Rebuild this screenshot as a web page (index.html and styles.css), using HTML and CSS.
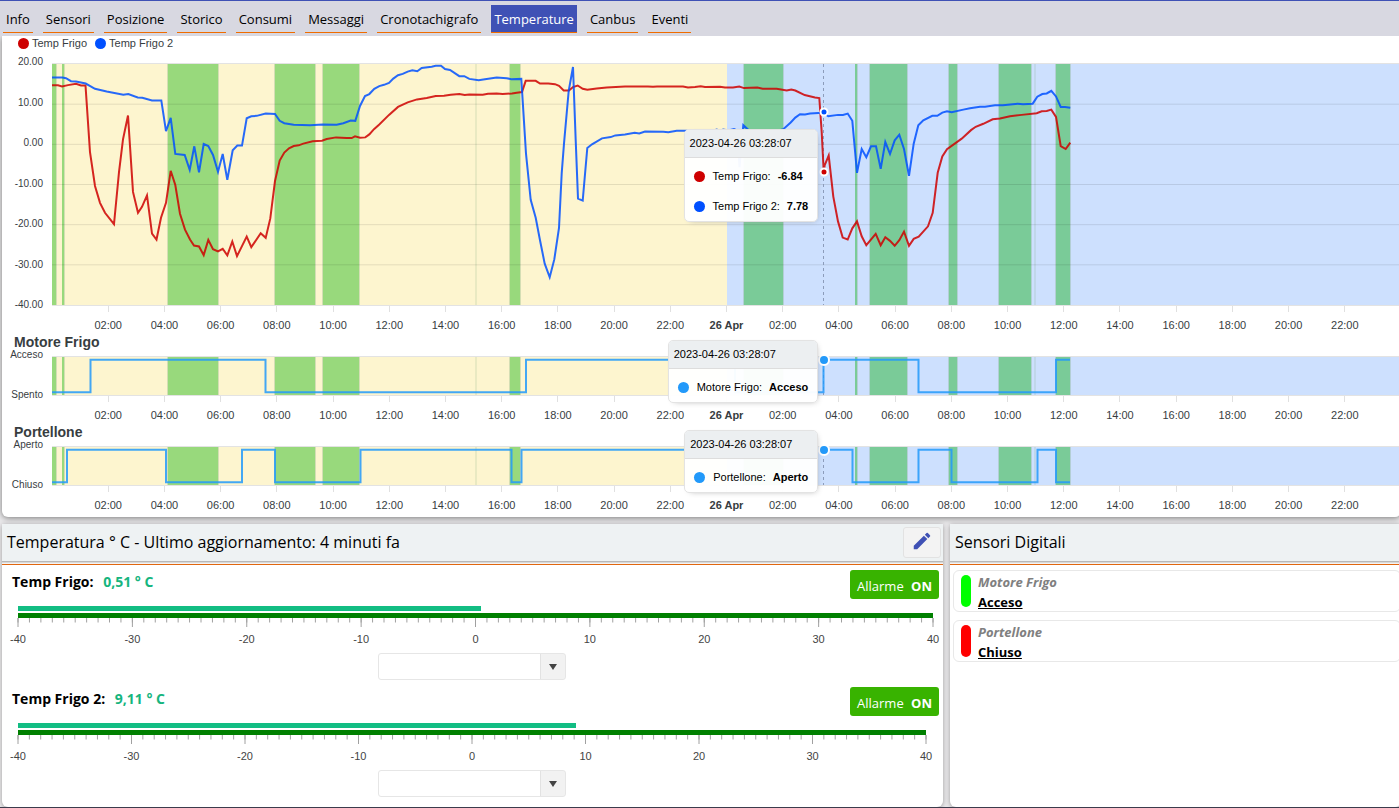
FILE: index.html
```html
<!DOCTYPE html>
<html lang="it">
<head>
<meta charset="utf-8">
<meta name="viewport" content="width=device-width, initial-scale=1">
<title>Temperature</title>
<link rel="stylesheet" href="styles.css">
</head>
<body>
<svg class="defs" aria-hidden="true">
  <defs>
    <g id="bands">
      <rect class="day-one" x="52" y="0" width="675" height="400"/>
      <rect class="day-two" x="727" y="0" width="674" height="400"/>
      <path class="stop-one" d="M52 0h4v400h-4zM62 0h2v400h-2zM168 0h50v400h-50zM275 0h40v400h-40zM323 0h36v400h-36zM510 0h10v400h-10z"/>
      <path class="stop-two" d="M744 0h39v400h-39zM855 0h2v400h-2zM870 0h37v400h-37zM949 0h8v400h-8zM999 0h32v400h-32zM1056 0h14v400h-14z"/>
      <path class="edge" d="M56.5 0V400M64.5 0V400M167.5 0V400M218.5 0V400M274.5 0V400M315.5 0V400M322.5 0V400M359.5 0V400M476 0V400M509.5 0V400M520.5 0V400M743.5 0V400M783.5 0V400M857.5 0V400M869.5 0V400M907.5 0V400M948.5 0V400M957.5 0V400M998.5 0V400M1031.5 0V400M1035 0V400M1055.5 0V400M1070.5 0V400"/>
    </g>
    <path id="minor-ticks" d="M0 0v5m1-5v5m1-5v5m1-5v5m1-5v5m1-5v5m1-5v5m1-5v5m1-5v5m1-5v5m1-5v5m1-5v5m1-5v5m1-5v5m1-5v5m1-5v5m1-5v5m1-5v5m1-5v5m1-5v5m1-5v5m1-5v5m1-5v5m1-5v5m1-5v5m1-5v5m1-5v5m1-5v5m1-5v5m1-5v5m1-5v5m1-5v5m1-5v5m1-5v5m1-5v5m1-5v5m1-5v5m1-5v5m1-5v5m1-5v5m1-5v5m1-5v5m1-5v5m1-5v5m1-5v5m1-5v5m1-5v5m1-5v5m1-5v5m1-5v5m1-5v5m1-5v5m1-5v5m1-5v5m1-5v5m1-5v5m1-5v5m1-5v5m1-5v5m1-5v5m1-5v5m1-5v5m1-5v5m1-5v5m1-5v5m1-5v5m1-5v5m1-5v5m1-5v5m1-5v5m1-5v5m1-5v5m1-5v5m1-5v5m1-5v5m1-5v5m1-5v5m1-5v5m1-5v5m1-5v5m1-5v5"/>
    <path id="major-ticks" d="M0 0v10M10 0v10M20 0v10M30 0v10M40 0v10M50 0v10M60 0v10M70 0v10M80 0v10"/>
  </defs>
</svg>

<nav class="tabs" aria-label="Sezioni">
  <a href="#">Info</a>
  <a href="#">Sensori</a>
  <a href="#">Posizione</a>
  <a href="#">Storico</a>
  <a href="#">Consumi</a>
  <a href="#">Messaggi</a>
  <a href="#">Cronotachigrafo</a>
  <a href="#" class="active" aria-current="page">Temperature</a>
  <a href="#">Canbus</a>
  <a href="#">Eventi</a>
</nav>

<main>
  <section class="charts">
    <article class="chart chart-main">
      <div class="legend">
        <span><i class="dot red"></i>Temp Frigo</span>
        <span><i class="dot blue"></i>Temp Frigo 2</span>
      </div>
      <div class="y-axis"><span>20.00</span><span>10.00</span><span>0.00</span><span>-10.00</span><span>-20.00</span><span>-30.00</span><span>-40.00</span></div>
      <div class="plot">
        <svg viewBox="52 63 1349 243" preserveAspectRatio="none" aria-hidden="true">
          <use href="#bands"/>
          <path class="grid" d="M52 103.5H1401M52 144H1401M52 184.5H1401M52 225H1401M52 265.5H1401"/>
          <path class="cross" d="M823.5 63V306"/>
          <polyline class="trace red" points="52,84.5 58,84.5 62,85.7 68,84.3 76,83 81,84.6 85.5,84.6 87,107 90,152 95,186 100,203 105,213 114,224.5 119,172 123,139 128,115 133,192 138,213 142,207 147,195.5 152,234 156.5,240 161,218 166,203 170.7,170.7 175.3,185 180,214 185,230 190,240 194,246 199,247 203.7,255.7 208.3,240.3 213,249.7 218,252 222.7,249.3 227.3,256 232.3,242 237,256.7 246.7,237 251.3,247.7 260.7,233.7 265.7,238.3 270.3,218.7 275,181 279.7,160.3 284.3,152.3 289,148 293.7,145.7 298.7,145 303.3,143.3 312.7,141 322,140.3 326.7,138.7 336,137 346.7,137.7 351.7,137.7 355,136 360,137.3 365.3,137 369.3,134 374,128.7 379.3,124 389,114.3 398,106.3 407.7,101.7 417,98.7 426.7,97.3 435.7,95.3 444,95 450.7,94 459.3,93.3 464.7,94.3 469.3,93.7 482.7,94 488,93 496.7,92.7 502.7,93.3 512,92.7 516.7,92 522,91.3 525.7,80 535.7,80 540,82.7 548.3,82.7 555,83.3 559,85 563.7,89.7 569,89.7 573,86.3 577.7,84.7 582.7,88 587.3,89 596.7,87.7 606.7,86.7 625,85.7 648,85.7 653,86 657,85.7 683,85.7 688,86.7 695,86.3 700.7,85.5 705,86.3 720,86 725,86.7 733,86.7 739.3,85.8 744,87.3 757.3,86.7 762.7,88 776.7,88 786.7,89.7 791.3,88.7 795.3,89.7 804.7,94.3 815,96.7 819.3,97.3 821.7,131.7 823.7,171.7 824.7,165 828.7,155.3 833.3,196.7 838,221.7 842.7,238 847.7,240 852.3,228.7 857,221.7 861.7,236.7 866.3,245.7 875.7,234.3 880.7,245.7 885.3,237.7 890,241.3 894.7,246.3 899.3,240.7 904,232 909,246.3 913.7,239.3 918.7,237 928,226.7 932.7,213 937.7,172.7 942.3,156.3 947,149 961.7,138.3 971,129.7 975.7,126.3 983.3,123.3 992.7,118.7 1000,118 1010,115.7 1021.7,114.3 1036.7,112.7 1041.7,110.7 1046.7,110.3 1051.3,109 1056,116.3 1060.7,145.7 1065.7,148.7 1070.3,142.3"/>
          <polyline class="trace blue" points="52,76.7 62.3,76.7 66,77.3 71,80.3 76,80.7 85.7,82.7 95,88 106.7,90.7 123.3,94 128.3,93.3 137.7,96.7 142.3,97 152,99.7 161.3,99.7 166,130.7 170.7,117.3 175.3,153.7 184.7,154.7 189.7,169.7 194.3,146 199,172.3 203.7,143.7 208.3,145.7 213,154.7 218,171.7 222.7,153.7 227.3,179.7 232.7,150 237.3,145.3 242,145.3 246.7,117.7 251.3,115.7 256.7,115.3 265.7,113 275,113.3 279.7,120.3 284.3,122.7 293.7,124.3 310,124.7 322.7,124 336.7,124.3 343.3,122.7 350.7,120 355.3,120.3 360,105.3 365,95.3 369.3,93.3 374.3,88 379.3,85.3 384,84 389,82 393.3,77.7 398,74.3 402.7,73 407.7,70.7 412.3,69.3 417.3,70.3 421.7,67 431.7,65.7 435.7,64.7 441,64.7 445,68 450,69 459.3,75.3 464.3,75.3 469.3,78 478.7,79.3 483.3,78.7 496.7,76.7 506.7,77.3 511.3,78.3 521.3,78 523.3,110 526,153.3 530.7,200 535.7,218 540,240.7 544.7,264.3 549.7,278 554.3,260 559,228.3 561.7,173.3 564,143.3 568.7,90 573,66 575.7,140 578,198.7 582.7,200.7 587.3,147.7 592,144 602,138 610.7,136.7 615.3,135 625,134 634.7,132.3 639.3,133 645,131 663.3,131.3 668.3,131.7 676.7,130.3 713,130.3 716.7,129 720,130.3 723.3,129 728.3,130 734,128.7 737,130 739.5,167 743.3,124.7 748.3,129.3 765,134 783.3,128.7 790.7,122 795.3,117 800,113.7 805,114 810,113 818.3,112.3 823.7,112.5 828.3,115.7 838,114.3 843,114.3 847.7,113 852.3,120.3 857,172.7 861.7,148.7 866.3,157 871,146 876,146 880.7,168.7 885.3,141.7 890,153.7 894.7,140 899.3,134.3 904,148.7 909,175.7 913.7,143.3 918.3,124.7 923.3,119.7 932.3,115.3 937.3,115.3 942.3,112 947,110.7 951.7,111.7 963.3,109 970,107.7 980,106 985,106 995,104.7 1003,104.7 1017.7,103 1023,103.6 1032.7,103 1037.3,96 1042.3,93.3 1046.7,92.7 1051.3,90 1056,95.7 1060.7,106.3 1065,106.3 1070.3,107"/>
        </svg>
        <i class="marker small red low"></i>
        <i class="marker small blue high"></i>
        <div class="tooltip tall">
          <header>2023-04-26 03:28:07</header>
          <p><i class="dot red"></i>Temp Frigo: <b>-6.84</b></p>
          <p><i class="dot blue"></i>Temp Frigo 2: <b>7.78</b></p>
        </div>
      </div>
      <div class="x-axis"><span>02:00</span><span>04:00</span><span>06:00</span><span>08:00</span><span>10:00</span><span>12:00</span><span>14:00</span><span>16:00</span><span>18:00</span><span>20:00</span><span>22:00</span><span><b>26 Apr</b></span><span>02:00</span><span>04:00</span><span>06:00</span><span>08:00</span><span>10:00</span><span>12:00</span><span>14:00</span><span>16:00</span><span>18:00</span><span>20:00</span><span>22:00</span></div>
    </article>

    <article class="chart">
      <h2>Motore Frigo</h2>
      <div class="y-axis"><span>Acceso</span><span>Spento</span></div>
      <div class="plot">
        <svg viewBox="52 0 1349 40" preserveAspectRatio="none" aria-hidden="true">
          <use href="#bands"/>
          <path class="cross" d="M823.5 0V40"/>
          <path class="step" d="M52 37H90.5V3H265.5V37H526V3H735V37H823.5V3H918.5V37H1056V3H1070"/>
        </svg>
        <i class="marker sky"></i>
        <div class="tooltip">
          <header>2023-04-26 03:28:07</header>
          <p><i class="dot sky"></i>Motore Frigo: <b>Acceso</b></p>
        </div>
      </div>
      <div class="x-axis"><span>02:00</span><span>04:00</span><span>06:00</span><span>08:00</span><span>10:00</span><span>12:00</span><span>14:00</span><span>16:00</span><span>18:00</span><span>20:00</span><span>22:00</span><span><b>26 Apr</b></span><span>02:00</span><span>04:00</span><span>06:00</span><span>08:00</span><span>10:00</span><span>12:00</span><span>14:00</span><span>16:00</span><span>18:00</span><span>20:00</span><span>22:00</span></div>
    </article>

    <article class="chart">
      <h2>Portellone</h2>
      <div class="y-axis"><span>Aperto</span><span>Chiuso</span></div>
      <div class="plot">
        <svg viewBox="52 0 1349 40" preserveAspectRatio="none" aria-hidden="true">
          <use href="#bands"/>
          <path class="cross" d="M823.5 0V40"/>
          <path class="step" d="M52 37H67V3H166V37H242V3H275V37H360.5V3H511.5V37H521.5V3H852.5V37H918.5V3H951.5V37H1037.5V3H1056V37H1070"/>
        </svg>
        <i class="marker sky"></i>
        <div class="tooltip">
          <header>2023-04-26 03:28:07</header>
          <p><i class="dot sky"></i>Portellone: <b>Aperto</b></p>
        </div>
      </div>
      <div class="x-axis"><span>02:00</span><span>04:00</span><span>06:00</span><span>08:00</span><span>10:00</span><span>12:00</span><span>14:00</span><span>16:00</span><span>18:00</span><span>20:00</span><span>22:00</span><span><b>26 Apr</b></span><span>02:00</span><span>04:00</span><span>06:00</span><span>08:00</span><span>10:00</span><span>12:00</span><span>14:00</span><span>16:00</span><span>18:00</span><span>20:00</span><span>22:00</span></div>
    </article>
  </section>

  <div class="panels">
    <section class="panel">
      <header class="panel-head">
        <h1>Temperatura ° C - Ultimo aggiornamento: 4 minuti fa</h1>
        <button type="button" class="edit" aria-label="Modifica">
          <svg viewBox="0 0 24 24" aria-hidden="true"><path d="M3 17.25V21h3.75L17.81 9.94l-3.75-3.75L3 17.25zM20.71 7.04a1 1 0 0 0 0-1.41l-2.34-2.34a1 1 0 0 0-1.41 0l-1.83 1.83 3.75 3.75 1.83-1.83z"/></svg>
        </button>
      </header>
      <div class="sensor">
        <div class="sensor-head">
          <h3>Temp Frigo: <span>0,51 ° C</span></h3>
          <button type="button" class="alarm">Allarme <b>ON</b></button>
        </div>
        <div class="gauge">
          <div class="value" style="width:50.6%"></div>
          <div class="range"></div>
          <svg viewBox="0 0 80 10" preserveAspectRatio="none" aria-hidden="true"><use href="#minor-ticks"/><use href="#major-ticks"/></svg>
          <div class="scale"><span>-40</span><span>-30</span><span>-20</span><span>-10</span><span>0</span><span>10</span><span>20</span><span>30</span><span>40</span></div>
        </div>
        <div class="combo"><select aria-label="Temp Frigo"><option></option></select></div>
      </div>
      <div class="sensor">
        <div class="sensor-head">
          <h3>Temp Frigo 2: <span>9,11 ° C</span></h3>
          <button type="button" class="alarm">Allarme <b>ON</b></button>
        </div>
        <div class="gauge short">
          <div class="value" style="width:61.4%"></div>
          <div class="range"></div>
          <svg viewBox="0 0 80 10" preserveAspectRatio="none" aria-hidden="true"><use href="#minor-ticks"/><use href="#major-ticks"/></svg>
          <div class="scale"><span>-40</span><span>-30</span><span>-20</span><span>-10</span><span>0</span><span>10</span><span>20</span><span>30</span><span>40</span></div>
        </div>
        <div class="combo"><select aria-label="Temp Frigo 2"><option></option></select></div>
      </div>
    </section>

    <section class="panel">
      <header class="panel-head"><h1>Sensori Digitali</h1></header>
      <ul class="digital">
        <li><i class="pill on"></i><div><em>Motore Frigo</em><u>Acceso</u></div></li>
        <li><i class="pill off"></i><div><em>Portellone</em><u>Chiuso</u></div></li>
      </ul>
    </section>
  </div>
</main>
</body>
</html>
```
FILE: styles.css
```css
* { box-sizing: border-box; }

body {
  margin: 0;
  min-height: 100vh;
  display: flex;
  flex-direction: column;
  overflow-x: hidden;
  background: #ebeaec;
  border-bottom: 1px solid #3c3c4c;
  color: #000;
  font-family: "Open Sans", "Noto Sans", sans-serif;
  font-size: 13px;
}

h1, h2, h3, p, ul { margin: 0; padding: 0; }
button, select { font: inherit; }
.defs { position: absolute; width: 0; height: 0; }

/* Tabs */
.tabs {
  position: relative;
  z-index: 1;
  display: flex;
  gap: 10px;
  height: 36px;
  padding: 4px 3px 3px;
  background: #d8d8e1;
  border-top: 1px solid #3f51b5;
}
.tabs a {
  padding: 0 3px;
  line-height: 28px;
  border-bottom: 1px solid #ef6c00;
  color: #000;
  text-decoration: none;
  white-space: nowrap;
}
.tabs .active { background: #3f51b5; color: #fff; }

main {
  flex: 1;
  display: flex;
  flex-direction: column;
  gap: 7px;
  margin: 0 -2px 0 2px;
}

/* Charts */
.charts {
  padding-bottom: 1px;
  background: #fff;
  border-radius: 0 0 6px 6px;
  box-shadow: 0 1px 6px #777;
  font-family: "Liberation Sans", Arial, sans-serif;
  font-size: 11px;
  color: #373d3f;
}
.chart {
  display: grid;
  grid-template-columns: 50px 1fr;
  grid-template-rows: 20px 40px 30px;
}
.chart-main { grid-template-rows: 27px 243px 30px; }
.legend, .chart h2 { grid-column: 1 / -1; }
.legend { display: flex; align-items: flex-start; gap: 8px; padding-left: 16px; line-height: 14px; }
.legend span { display: flex; align-items: center; gap: 3px; }
.chart h2 { padding-left: 12px; font-size: 14px; line-height: 12px; }

.dot { width: 11px; height: 11px; border-radius: 50%; flex: none; }
i.red { background: #ce0000; }
i.blue { background: #0050ff; }
i.sky { background: #2299fa; }

.y-axis {
  display: flex;
  flex-direction: column;
  justify-content: space-between;
  margin: -7px 0 -5px;
  padding-right: 9px;
  text-align: right;
  font-size: 10px;
  line-height: 12px;
}
.plot {
  position: relative;
  border-top: 1px solid #e3e3e3;
  border-bottom: 1px solid #e3e3e3;
}
.plot svg { display: block; width: 100%; height: 100%; }
.plot path, .plot polyline { vector-effect: non-scaling-stroke; }
.day-one { fill: #fdf5cf; }
.day-two { fill: #cde0fe; }
.stop-one { fill: #98d97c; }
.stop-two { fill: #7acb98; }
.edge { stroke: #78aa78; stroke-opacity: .3; vector-effect: non-scaling-stroke; }
.grid { stroke: #000; stroke-opacity: .1; }
.cross { stroke: #8c9cba; stroke-dasharray: 3; }
.trace { fill: none; stroke-width: 2; stroke-opacity: .85; }
.trace.red { stroke: #ce0000; }
.trace.blue { stroke: #0050ff; }
.step { fill: none; stroke: #2299fa; stroke-opacity: .85; stroke-width: 2; }

.x-axis {
  grid-column: 2;
  display: grid;
  grid-template-columns: repeat(48, minmax(0, 1fr));
  align-content: start;
  line-height: 14px;
  text-align: center;
}
.x-axis span { grid-column-end: span 2; white-space: nowrap; }
.x-axis span:first-child { grid-column: 2 / span 2; }
.x-axis span::before {
  content: "";
  display: block;
  width: 1px;
  height: 6px;
  margin: 0 auto 6px;
  background: #e0e0e0;
}

.marker {
  position: absolute;
  left: 57.2%;
  top: 3px;
  width: 12px;
  height: 12px;
  border: 2px solid #fff;
  border-radius: 50%;
  transform: translate(-50%, -50%);
}
.marker.small { width: 9px; height: 9px; }
.marker.low { top: 45%; }
.marker.high { top: 20%; }

.tooltip {
  position: absolute;
  z-index: 2;
  right: 43.2%;
  top: -17px;
  overflow: hidden;
  background: rgba(255, 255, 255, .96);
  border: 1px solid #e3e3e3;
  border-radius: 5px;
  box-shadow: 2px 2px 6px -4px #999;
  color: #000;
  white-space: nowrap;
}
.tooltip.tall { top: 65px; }
.tooltip header {
  margin-bottom: 3px;
  padding: 0 5px;
  line-height: 27px;
  background: #eceff1;
  border-bottom: 1px solid #ddd;
}
.tooltip p { display: flex; align-items: center; height: 30px; padding: 0 9px; }
.tooltip .dot { margin-right: 8px; }
.tooltip b { margin-left: 7px; }

/* Panels */
.panels {
  flex: 1;
  display: grid;
  grid-template-columns: 941fr 451fr;
  gap: 7px;
}
.panel {
  background: #fff;
  border-radius: 0 0 6px 6px;
  box-shadow: 0 1px 5px rgba(0, 0, 0, .35);
}
.panel-head {
  display: flex;
  justify-content: space-between;
  align-items: center;
  height: 41px;
  padding: 0 2px 3px 5px;
  background: linear-gradient(#eef2f3 37px, #a8a8a8 37px, #e8e8e8 39px, #fff 40px);
  border-bottom: 1px solid #e0660f;
}
.panel-head h1 { font-size: 16px; font-weight: 400; line-height: 37px; }
.edit {
  display: flex;
  align-items: center;
  justify-content: center;
  width: 38px;
  height: 31px;
  padding: 0 0 3px;
  background: #f3f3f3;
  border: 1px solid #e2e2e2;
  border-radius: 3px;
}
.edit svg { width: 22px; height: 22px; fill: #3f51b5; }

.sensor { height: 117px; padding: 5px 4px 0 10px; }
.sensor-head { display: flex; justify-content: space-between; height: 36px; }
.sensor h3 { font-size: 14px; line-height: 23px; }
.sensor h3 span { margin-left: 6px; color: #16b57e; }
.alarm {
  height: 29px;
  padding: 3px 7px 0;
  background: #38b300;
  border: 0;
  border-radius: 3px;
  color: #fff;
  white-space: nowrap;
}
.alarm b { margin-left: 4px; }
.gauge { margin: 0 6px 0 6px; }
.gauge.short { margin-right: 13px; }
.gauge .value { height: 5px; margin-bottom: 2px; background: #12bd83; }
.gauge .range { height: 5px; background: #008000; }
.gauge svg { display: block; width: 100%; height: 9px; overflow: visible; stroke: #a0a0a0; }
#minor-ticks, #major-ticks { vector-effect: non-scaling-stroke; }
.scale {
  display: flex;
  justify-content: space-between;
  margin-top: 5px;
  font: 11px/14px "Liberation Sans", Arial, sans-serif;
  color: #444;
}
.scale span { display: flex; justify-content: center; width: 0; }
.combo {
  position: relative;
  width: 188px;
  height: 27px;
  margin: 7px 0 0 calc(50% - 98px);
}
.combo select {
  appearance: none;
  width: 100%;
  height: 100%;
  background: linear-gradient(90deg, #fff 161px, #e2e2e2 161px, #e2e2e2 162px, #f2f2f2 162px);
  border: 1px solid #e6e6e6;
  border-radius: 3px;
}
.combo::after {
  content: "";
  position: absolute;
  right: 9px;
  top: 11px;
  border: 4px solid transparent;
  border-top: 6px solid #444;
  border-bottom: 0;
  pointer-events: none;
}

.digital { display: grid; gap: 8px; padding: 5px 0 0 3px; list-style: none; }
.digital li {
  display: flex;
  gap: 7px;
  height: 42px;
  padding: 4px 7px;
  border: 1px solid #e8e8e8;
  border-radius: 6px;
}
.pill { width: 10px; border-radius: 5px; }
.pill.on { background: #0f0; }
.pill.off { background: #f00; }
.digital em, .digital u { display: block; font-weight: 700; line-height: 20px; }
.digital div { margin-top: -3px; }
.digital em { color: #808080; }
```
